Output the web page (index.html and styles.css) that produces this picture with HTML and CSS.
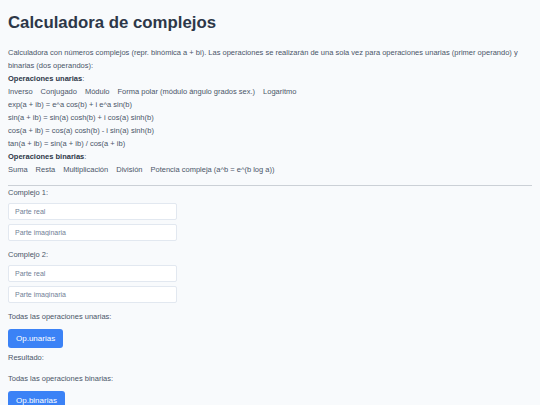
FILE: index.html
```html
<!DOCTYPE html>
<html lang="es">
<head>
<meta charset="utf-8">
<title>Calculadora de complejos</title>
<link rel="stylesheet" href="styles.css">
</head>
<body>
<h1 class="title">Calculadora de complejos</h1>
<div class="intro">
  <p>Calculadora con números complejos (repr. binómica a + bi). Las operaciones se realizarán de una sola vez para operaciones unarias (primer operando) y binarias (dos operandos):</p>
  <p><b>Operaciones unarias</b>:</p>
  <p class="ops"><span>Inverso</span><span>Conjugado</span><span>Módulo</span><span>Forma polar (módulo ángulo grados sex.)</span><span>Logaritmo</span></p>
  <p>exp(a + ib) = e^a cos(b) + i e^a sin(b)</p>
  <p>sin(a + ib) = sin(a) cosh(b) + i cos(a) sinh(b)</p>
  <p>cos(a + ib) = cos(a) cosh(b) - i sin(a) sinh(b)</p>
  <p>tan(a + ib) = sin(a + ib) / cos(a + ib)</p>
  <p><b>Operaciones binarias</b>:</p>
  <p class="ops"><span>Suma</span><span>Resta</span><span>Multiplicación</span><span>División</span><span>Potencia compleja (a^b = e^(b log a))</span></p>
</div>
<hr class="sep">
<form class="calc">
  <label class="lbl">Complejo 1:</label>
  <input class="field" type="text" placeholder="Parte real">
  <input class="field" type="text" placeholder="Parte imaginaria">
  <label class="lbl gap">Complejo 2:</label>
  <input class="field" type="text" placeholder="Parte real">
  <input class="field" type="text" placeholder="Parte imaginaria">
  <label class="lbl gap">Todas las operaciones unarias:</label>
  <button class="btn" type="button">Op.unarias</button>
  <label class="lbl result">Resultado:</label>
  <label class="lbl">Todas las operaciones binarias:</label>
  <button class="btn" type="button">Op.binarias</button>
</form>
</body>
</html>
```
FILE: styles.css
```css
html, body {
  background: #f8fafc;
}
body {
  margin: 0;
  padding: 12px 8px 0;
  font-family: "Liberation Sans", Arial, sans-serif;
  color: #4a5568;
  font-size: 7.5px;
}
.title {
  margin: 0 0 12px;
  font-size: 16.8px;
  line-height: 22px;
  font-weight: bold;
  color: #2d3748;
}
.intro p {
  margin: 0;
  line-height: 13px;
}
.intro b {
  color: #2d3748;
}
.ops span {
  margin-right: 8px;
}
.sep {
  margin: 9px 0 0;
  border: 0;
  border-top: 1px solid #cbd0d6;
}
.calc {
  display: flex;
  flex-direction: column;
  align-items: flex-start;
}
.lbl {
  line-height: 13px;
  margin: 0 0 4px;
}
.lbl.gap {
  margin-top: 3px;
}
.lbl.result {
  margin-bottom: 8px;
}
.field {
  width: 169px;
  height: 17px;
  box-sizing: border-box;
  margin: 0 0 4px;
  padding: 0 6px;
  border: 1px solid #e2e8f0;
  border-radius: 2px;
  background: #fff;
  font-family: inherit;
  font-size: 7px;
  color: #4a5568;
}
.field::placeholder {
  color: #718096;
}
.btn {
  margin: 2px 0 3px;
  height: 19px;
  padding: 0 8px;
  border: 0;
  border-radius: 3px;
  background: #3b82f6;
  color: #fff;
  font-family: inherit;
  font-size: 8px;
}
```
